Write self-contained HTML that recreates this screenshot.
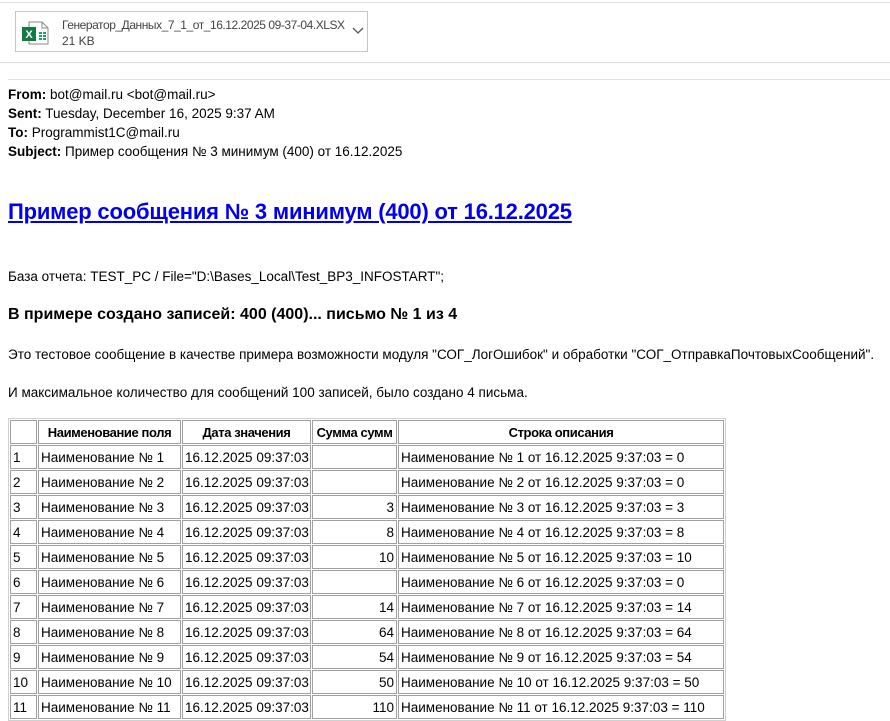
<!DOCTYPE html>
<html><head><meta charset="utf-8"><style>
body{margin:0;width:890px;height:712px;overflow:hidden;background:#fff;font-family:"Liberation Sans","DejaVu Sans",sans-serif;color:#000;position:relative}
.abs{position:absolute;white-space:nowrap}
.hl{position:absolute;height:1px;background:#e1e1e1}
.att{position:absolute;left:15px;top:11px;width:353px;height:41px;border:1px solid #c6c6c6;box-sizing:border-box}
.hdr{font-size:13.5px;line-height:19px}
table{position:absolute;left:8px;top:418px;border:1px solid #d0d0d0;border-collapse:separate;border-spacing:1px;font-size:13.5px;table-layout:fixed;width:718px}
td,th{border:1px solid #a0a0a0;height:22px;padding:0 2px;white-space:nowrap;overflow:hidden}
th{font-weight:bold;font-size:13px;letter-spacing:-0.4px;padding:0 1px}
td.n{text-align:right}
</style></head><body>
<div class="hl" style="left:0;top:2px;width:890px"></div>
<div class="att">
<svg style="position:absolute;left:5px;top:9px" width="30" height="24" viewBox="0 0 30 24">
<path d="M8 1h13l6 6v16H8z" fill="#fff" stroke="#888"/>
<path d="M21 1v6h6" fill="none" stroke="#888"/>
<rect x="17" y="10" width="8" height="9" fill="#fff"/>
<g fill="#21a366"><rect x="18" y="11" width="3" height="2"/><rect x="22" y="11" width="3" height="2"/><rect x="18" y="14" width="3" height="2"/><rect x="22" y="14" width="3" height="2"/><rect x="18" y="17" width="3" height="2"/><rect x="22" y="17" width="3" height="2"/></g>
<rect x="1" y="6" width="14" height="14" fill="#107c41"/>
<text x="8" y="17" font-size="11" font-weight="bold" fill="#fff" text-anchor="middle" font-family="Liberation Sans">X</text>
</svg>
<div class="abs" style="left:46px;top:6px;font-size:12px;color:#444;letter-spacing:-0.45px">Генератор_Данных_7_1_от_16.12.2025 09-37-04.XLSX</div>
<div class="abs" style="left:46px;top:22px;font-size:12px;color:#444">21 KB</div>
<svg style="position:absolute;left:336px;top:15px" width="12" height="8"><path d="M1 1l5 5 5-5" fill="none" stroke="#555" stroke-width="1.3"/></svg>
</div>
<div class="hl" style="left:0;top:62px;width:890px"></div>
<div class="hl" style="left:8px;top:79px;width:882px"></div>
<div class="abs hdr" style="left:8px;top:85px"><b>From:</b> bot@mail.ru &lt;bot@mail.ru&gt;<br><b>Sent:</b> Tuesday, December 16, 2025 9:37 AM<br><b>To:</b> Programmist1C@mail.ru<br><b>Subject:</b> Пример сообщения № 3 минимум (400) от 16.12.2025</div>
<div class="abs" style="left:8px;top:199px;font-size:22px;font-weight:bold;color:#0000ee;text-decoration:underline;letter-spacing:-0.2px">Пример сообщения № 3 минимум (400) от 16.12.2025</div>
<div class="abs" style="left:8px;top:269px;font-size:13.5px">База отчета: TEST_PC / File="D:\Bases_Local\Test_BP3_INFOSTART";</div>
<div class="abs" style="left:8px;top:306px;font-size:16px;font-weight:bold">В примере создано записей: 400 (400)... письмо № 1 из 4</div>
<div class="abs" style="left:8px;top:347px;font-size:13.5px">Это тестовое сообщение в качестве примера возможности модуля "СОГ_ЛогОшибок" и обработки "СОГ_ОтправкаПочтовыхСообщений".</div>
<div class="abs" style="left:8px;top:385px;font-size:13.5px">И максимальное количество для сообщений 100 записей, было создано 4 письма.</div>
<table>
<colgroup><col style="width:27px"><col style="width:143px"><col style="width:129px"><col style="width:85px"><col style="width:326px"></colgroup>
<tr><th></th><th>Наименование поля</th><th>Дата значения</th><th>Сумма сумм</th><th>Строка описания</th></tr>
<tr><td>1</td><td>Наименование № 1</td><td>16.12.2025 09:37:03</td><td class="n"></td><td>Наименование № 1 от 16.12.2025 9:37:03 = 0</td></tr>
<tr><td>2</td><td>Наименование № 2</td><td>16.12.2025 09:37:03</td><td class="n"></td><td>Наименование № 2 от 16.12.2025 9:37:03 = 0</td></tr>
<tr><td>3</td><td>Наименование № 3</td><td>16.12.2025 09:37:03</td><td class="n">3</td><td>Наименование № 3 от 16.12.2025 9:37:03 = 3</td></tr>
<tr><td>4</td><td>Наименование № 4</td><td>16.12.2025 09:37:03</td><td class="n">8</td><td>Наименование № 4 от 16.12.2025 9:37:03 = 8</td></tr>
<tr><td>5</td><td>Наименование № 5</td><td>16.12.2025 09:37:03</td><td class="n">10</td><td>Наименование № 5 от 16.12.2025 9:37:03 = 10</td></tr>
<tr><td>6</td><td>Наименование № 6</td><td>16.12.2025 09:37:03</td><td class="n"></td><td>Наименование № 6 от 16.12.2025 9:37:03 = 0</td></tr>
<tr><td>7</td><td>Наименование № 7</td><td>16.12.2025 09:37:03</td><td class="n">14</td><td>Наименование № 7 от 16.12.2025 9:37:03 = 14</td></tr>
<tr><td>8</td><td>Наименование № 8</td><td>16.12.2025 09:37:03</td><td class="n">64</td><td>Наименование № 8 от 16.12.2025 9:37:03 = 64</td></tr>
<tr><td>9</td><td>Наименование № 9</td><td>16.12.2025 09:37:03</td><td class="n">54</td><td>Наименование № 9 от 16.12.2025 9:37:03 = 54</td></tr>
<tr><td>10</td><td>Наименование № 10</td><td>16.12.2025 09:37:03</td><td class="n">50</td><td>Наименование № 10 от 16.12.2025 9:37:03 = 50</td></tr>
<tr><td>11</td><td>Наименование № 11</td><td>16.12.2025 09:37:03</td><td class="n">110</td><td>Наименование № 11 от 16.12.2025 9:37:03 = 110</td></tr>
</table>
</body></html>
